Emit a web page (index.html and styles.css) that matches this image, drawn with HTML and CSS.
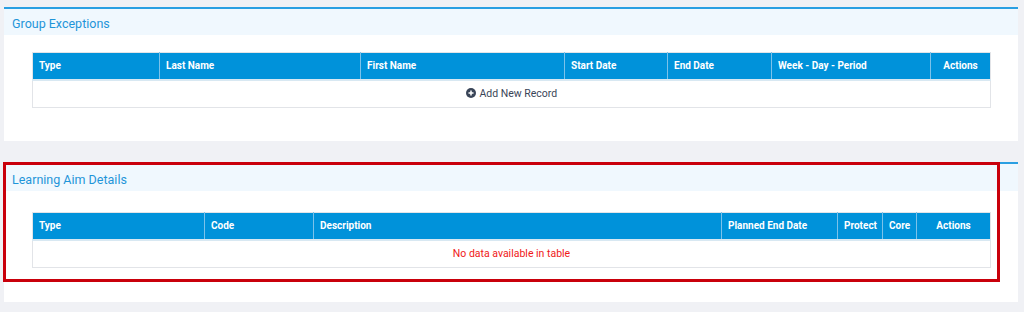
FILE: index.html
```html
<!DOCTYPE html>
<html lang="en">
<head>
    <meta charset="UTF-8">
    <meta name="viewport" content="width=device-width, initial-scale=1.0">
    <title>Learner Details</title>
    <link rel="stylesheet" href="styles.css">
</head>
<body>
    <div class="page">
        <div class="panel">
            <div class="panel-header">Group Exceptions</div>
            <div class="panel-body">
                <table class="grid">
                    <colgroup>
                        <col style="width: 127px">
                        <col style="width: 201px">
                        <col style="width: 204px">
                        <col style="width: 103px">
                        <col style="width: 104px">
                        <col style="width: 159px">
                        <col style="width: 60px">
                    </colgroup>
                    <thead>
                        <tr>
                            <th>Type</th>
                            <th>Last Name</th>
                            <th>First Name</th>
                            <th>Start Date</th>
                            <th>End Date</th>
                            <th>Week - Day - Period</th>
                            <th class="center">Actions</th>
                        </tr>
                    </thead>
                    <tbody>
                        <tr>
                            <td colspan="7" class="add-row">
                                <svg class="plus" viewBox="0 0 16 16" width="10" height="10">
                                    <circle cx="8" cy="8" r="8" fill="#3a4558"/>
                                    <path d="M8 4v8M4 8h8" stroke="#fff" stroke-width="2.4"/>
                                </svg>
                                Add New Record
                            </td>
                        </tr>
                    </tbody>
                </table>
            </div>
        </div>

        <div class="panel second">
            <div class="panel-header">Learning Aim Details</div>
            <div class="panel-body">
                <table class="grid">
                    <colgroup>
                        <col style="width: 172px">
                        <col style="width: 109px">
                        <col style="width: 408px">
                        <col style="width: 116px">
                        <col style="width: 45px">
                        <col style="width: 34px">
                        <col style="width: 74px">
                    </colgroup>
                    <thead>
                        <tr>
                            <th>Type</th>
                            <th>Code</th>
                            <th>Description</th>
                            <th>Planned End Date</th>
                            <th>Protect</th>
                            <th>Core</th>
                            <th class="center">Actions</th>
                        </tr>
                    </thead>
                    <tbody>
                        <tr>
                            <td colspan="7" class="empty">No data available in table</td>
                        </tr>
                    </tbody>
                </table>
            </div>
            <div class="highlight"></div>
        </div>
    </div>
</body>
</html>
```

FILE: styles.css
```css
* {
    box-sizing: border-box;
    margin: 0;
    padding: 0;
}

body {
    font-family: Roboto, 'Liberation Sans', sans-serif;
    background: #f0f1f5;
}

.page {
    padding: 7px 6px 0 4px;
}

.panel {
    background: #fff;
    border-top: 2px solid #2a9fe2;
    padding-bottom: 33px;
}

.panel.second {
    position: relative;
    margin-top: 21px;
    padding-bottom: 34px;
}

.panel-header {
    background: #f0f8fe;
    height: 26px;
    line-height: 30px;
    padding-left: 8px;
    font-size: 12.5px;
    color: #1f95d9;
}

.second .panel-header {
    height: 27px;
    line-height: 32px;
}

.panel-body {
    padding: 17px 28px 0 28px;
}

.second .panel-body {
    padding-top: 21px;
}

.grid {
    width: 958px;
    border-collapse: collapse;
    table-layout: fixed;
    border: 1px solid #e2e4e8;
}

.grid th {
    background: #0092da;
    color: #fff;
    font-size: 10px;
    font-weight: 700;
    text-align: left;
    height: 27px;
    padding: 0 6px;
    white-space: nowrap;
    border-left: 1px solid #7cc2ea;
    border-bottom: 2px solid #d8e8f2;
}

.grid th:first-child {
    border-left: none;
}

.grid th.center {
    text-align: center;
}

.grid td {
    height: 28px;
    text-align: center;
    font-size: 10.5px;
}

.add-row {
    color: #3a4558;
}

.plus {
    vertical-align: -1px;
    margin-right: 1px;
}

.empty {
    color: #f01818;
}

.highlight {
    position: absolute;
    left: -1px;
    top: -2px;
    right: 18px;
    bottom: 20px;
    border: 3px solid #c9000b;
    pointer-events: none;
}
```
